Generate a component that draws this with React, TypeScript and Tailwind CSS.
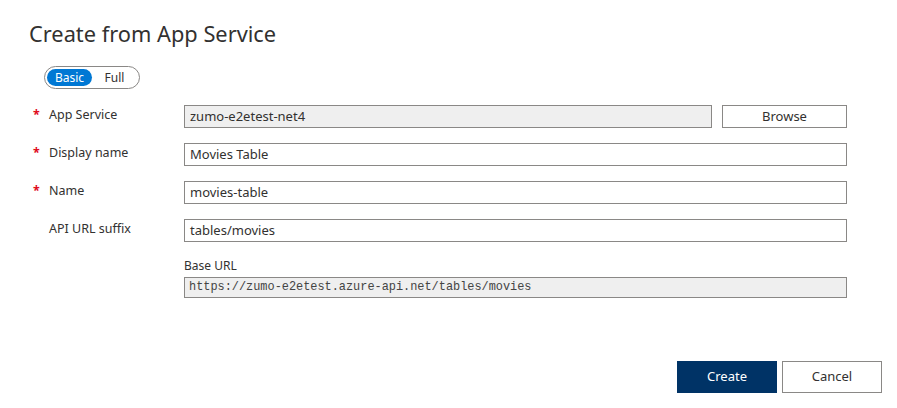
import { useState } from "react";

const font = { fontFamily: '"Segoe UI", "Noto Sans", sans-serif' };

const Field = ({ label, required, children }: { label: string; required?: boolean; children: React.ReactNode }) => (
  <div className="flex items-center h-[23px] mb-[15px]">
    <div className="w-[155px] flex items-center text-[12.5px] text-[#323130] -mt-[3px]">
      <span className="w-[20px] pl-[4px] text-[#e00b1c] font-bold">{required ? "*" : ""}</span>
      <span>{label}</span>
    </div>
    {children}
  </div>
);

const TextBox = ({ value, disabled }: { value: string; disabled?: boolean }) => (
  <div
    className={`flex-1 h-[23px] border border-[#8a8886] px-[5px] flex items-center text-[13px] text-[#323130] ${
      disabled ? "bg-[#efefef] text-[#555]" : "bg-white"
    }`}
  >
    {value}
  </div>
);

export default function App() {
  const [mode, setMode] = useState("Basic");

  return (
    <div style={font} className="w-[897px] h-[408px] bg-white pl-[29px] pr-[15px] pt-[20px] flex flex-col">
      <h1 className="text-[21.8px] leading-[28px] text-[#323130]">Create from App Service</h1>

      {/* Basic / Full switch */}
      <div className="mt-[18px] ml-[15px] w-[96px] h-[23px] rounded-full border border-[#8a8886] flex items-center px-[2px] text-[12px]">
        {["Basic", "Full"].map((m) => (
          <button
            key={m}
            onClick={() => setMode(m)}
            className={`h-[17px] rounded-full leading-[17px] ${
              m === "Basic" ? "w-[45px]" : "flex-1"
            } ${mode === m ? "bg-[#0078d4] text-white" : "text-[#323130]"}`}
          >
            {m}
          </button>
        ))}
      </div>

      <div className="mt-[16px] mr-[35px]">
        <Field label="App Service" required>
          <TextBox value="zumo-e2etest-net4" disabled />
          <button className="ml-[10px] w-[125px] h-[23px] border border-[#8a8886] text-[13px] text-[#323130] bg-white">
            Browse
          </button>
        </Field>
        <Field label="Display name" required>
          <TextBox value="Movies Table" />
        </Field>
        <Field label="Name" required>
          <TextBox value="movies-table" />
        </Field>
        <Field label="API URL suffix">
          <TextBox value="tables/movies" />
        </Field>

        <div className="ml-[155px]">
          <div className="text-[12px] leading-[18px] text-[#323130]">Base URL</div>
          <div
            className="mt-[2px] h-[21px] border border-[#8a8886] bg-[#efefef] px-[4px] flex items-center text-[11.9px] text-[#444]"
            style={{ fontFamily: '"Liberation Mono", monospace' }}
          >
            https://zumo-e2etest.azure-api.net/tables/movies
          </div>
        </div>
      </div>

      <div className="mt-[63px] flex justify-end gap-[5px]">
        <button className="w-[100px] h-[32px] bg-[#003366] text-white text-[13px]">Create</button>
        <button className="w-[100px] h-[32px] border border-[#8a8886] bg-white text-[13px] text-[#323130]">
          Cancel
        </button>
      </div>
    </div>
  );
}
